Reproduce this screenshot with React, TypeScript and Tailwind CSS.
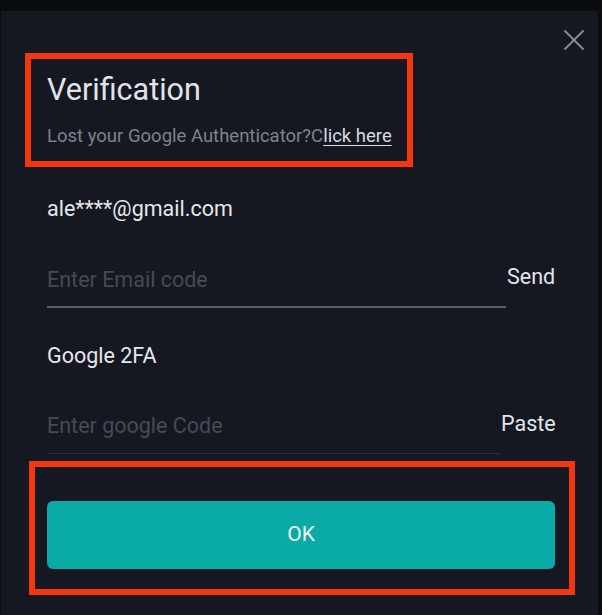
import { X } from 'lucide-react';

export default function App() {
  return (
    <div
      className="h-[615px] w-[602px] overflow-hidden bg-[#0a0c10] pt-[11px]"
      style={{ fontFamily: 'Roboto, "Noto Sans", sans-serif' }}
    >
      <div className="relative ml-[1px] flex h-[604px] w-[597px] flex-col bg-[#151820]">
        {/* close */}
        <button type="button" className="absolute right-[6px] top-[11px] text-[#868993]">
          <X size={36} strokeWidth={1.3} />
        </button>

        {/* heading, marked */}
        <div className="ml-[24px] mt-[42px] h-[114px] w-[388px] border-[6px] border-[#f2360e] pl-[16px] pt-[13px]">
          <h1 className="text-[30.5px] leading-[36px] text-[#e2e4ea]">Verification</h1>
          <p className="mt-[16px] whitespace-nowrap text-[18.5px] leading-[24px] text-[#7f828b]">
            Lost your Google Authenticator?C
            <span className="text-[#d9dbe0] underline underline-offset-[3px]">lick here</span>
          </p>
        </div>

        <p className="ml-[46px] mt-[28px] text-[21.5px] leading-[28px] text-[#e6e7eb]">ale****@gmail.com</p>

        {/* email code */}
        <div className="ml-[46px] mt-[43px] flex items-start">
          <input
            placeholder="Enter Email code"
            className="w-[459px] border-b-2 border-[#5c5f68] bg-transparent pb-[12px] text-[21.5px] leading-[28px] text-[#e6e7eb] outline-none placeholder:text-[#464a54]"
          />
          <span className="-mt-[3px] ml-[1px] text-[21.5px] leading-[28px] text-[#e3e5ea]">Send</span>
        </div>

        <p className="ml-[46px] mt-[34px] text-[21.5px] leading-[28px] text-[#e6e7eb]">Google 2FA</p>

        {/* google code */}
        <div className="ml-[46px] mt-[42px] flex items-start">
          <input
            placeholder="Enter google Code"
            className="w-[453px] border-b border-[#2a2d38] bg-transparent pb-[13px] text-[21.5px] leading-[28px] text-[#e6e7eb] outline-none placeholder:text-[#464a54]"
          />
          <span className="-mt-[2px] ml-[1px] text-[21.5px] leading-[28px] text-[#e3e5ea]">Paste</span>
        </div>

        {/* confirm, marked */}
        <div className="ml-[28px] mt-[7px] h-[134px] w-[546px] border-[6px] border-[#f2360e] pl-[12px] pt-[34px]">
          <button
            type="button"
            className="h-[68px] w-[508px] rounded-[6px] bg-[#0aaba6] text-[21px] text-[#f2f4f4]"
          >
            OK
          </button>
        </div>
      </div>
    </div>
  );
}
